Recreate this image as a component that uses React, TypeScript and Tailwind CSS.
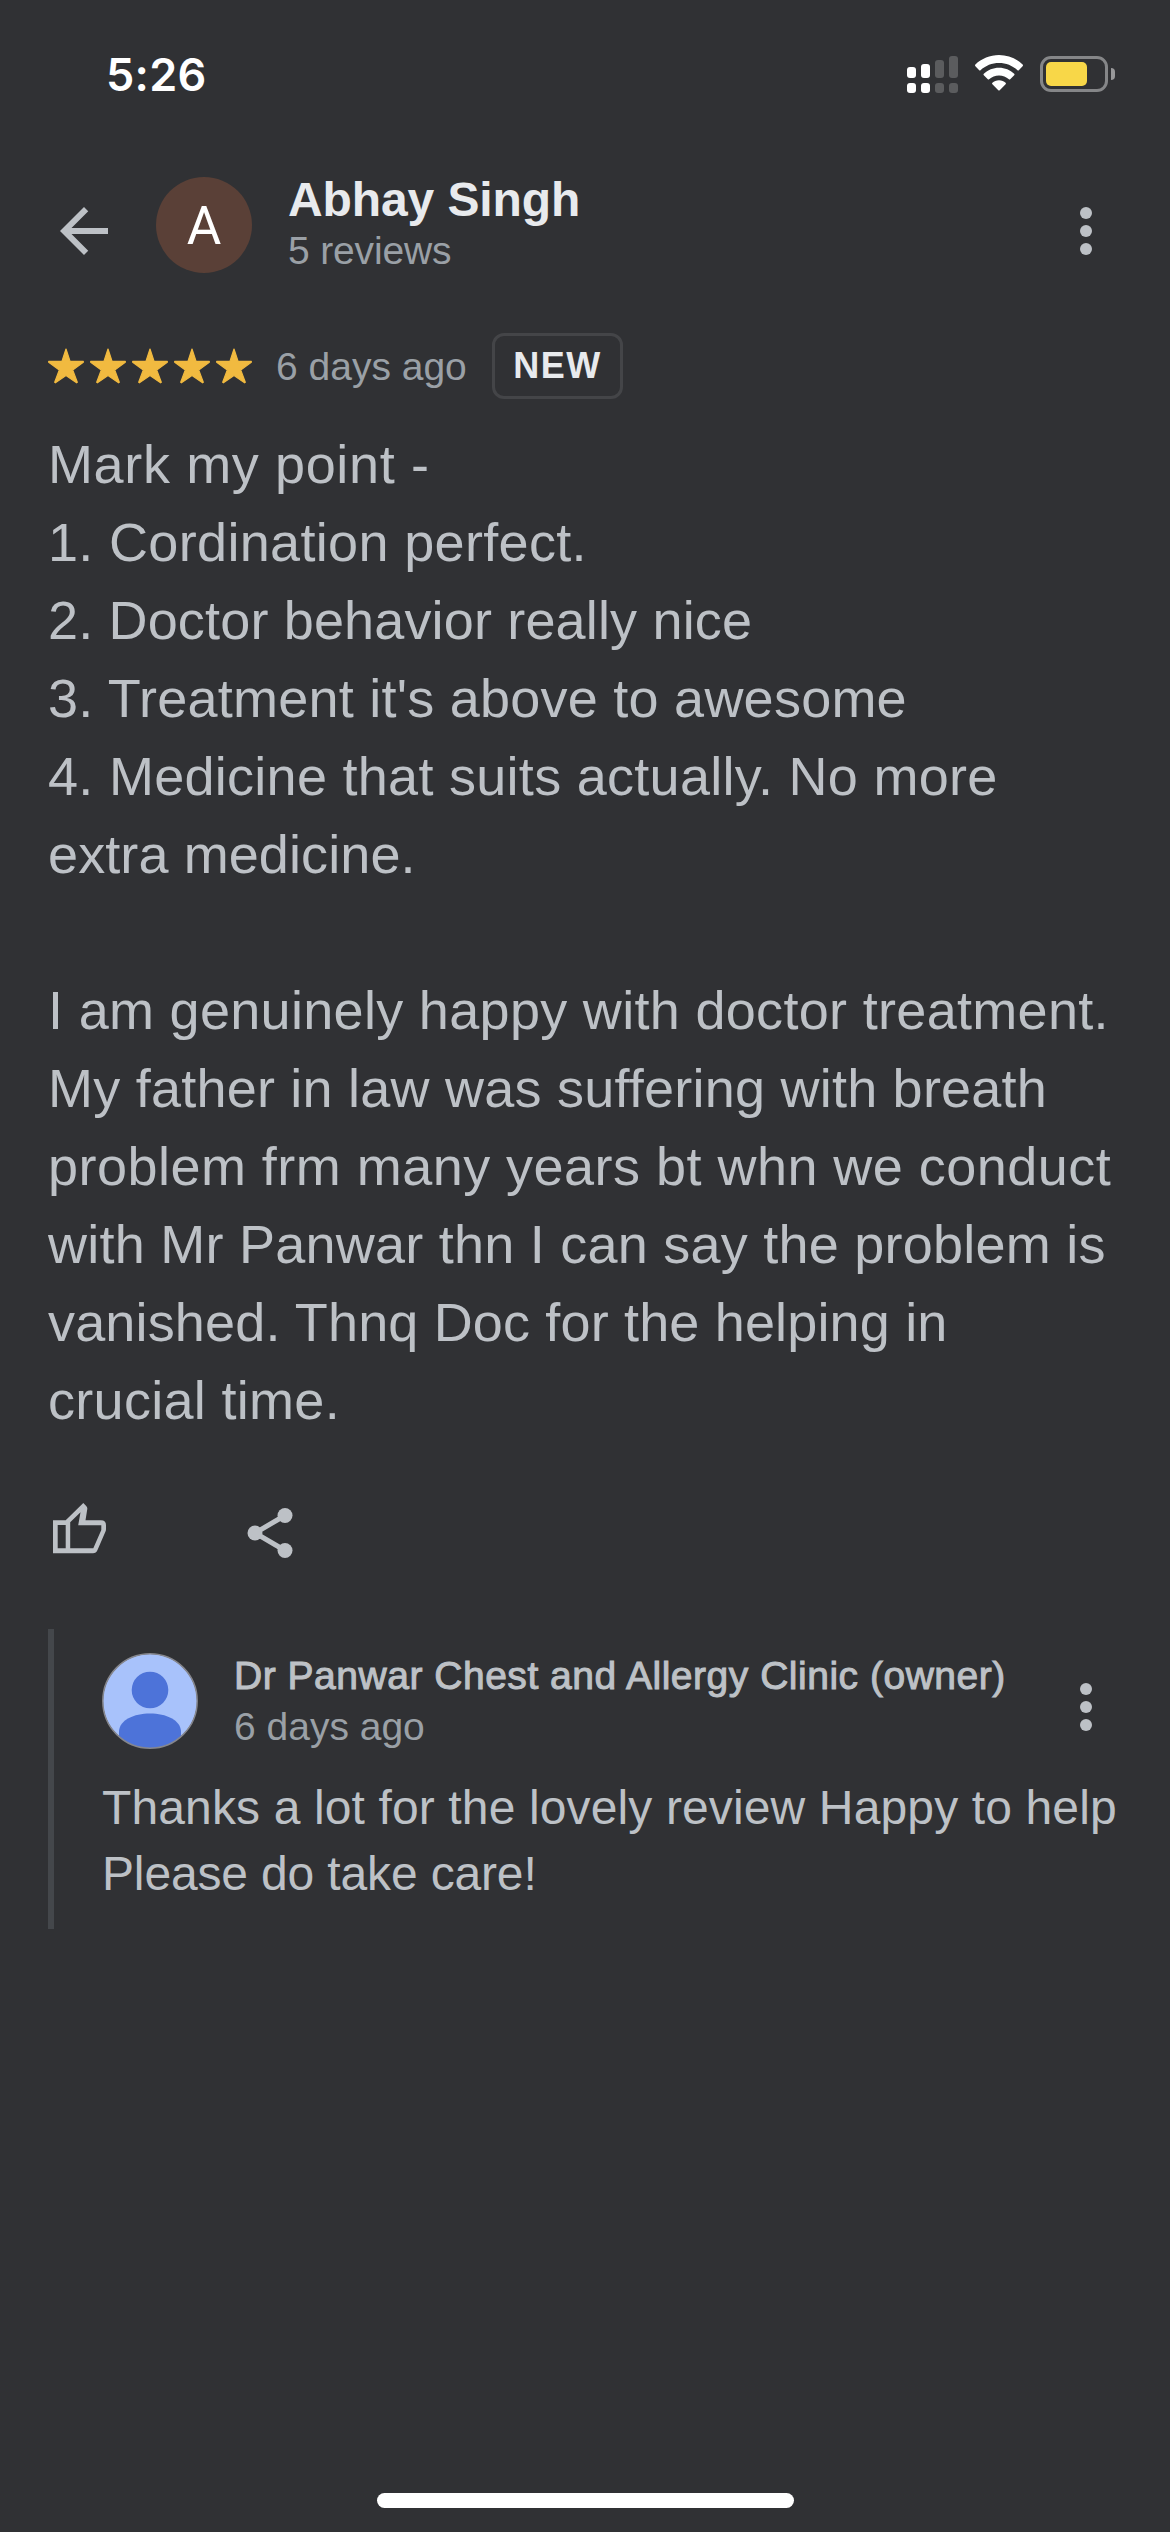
import React from "react";

type Line = { text: string; tracking: string };

const reviewLines: Line[] = [
  { text: "Mark my point -", tracking: "tracking-[0.63px]" },
  { text: "1. Cordination perfect.", tracking: "tracking-[0.33px]" },
  { text: "2. Doctor behavior really nice", tracking: "tracking-[0.16px]" },
  { text: "3. Treatment it's above to awesome", tracking: "tracking-[0.24px]" },
  { text: "4. Medicine that suits actually. No more", tracking: "tracking-[0.28px]" },
  { text: "extra medicine.", tracking: "tracking-[0.1px]" },
  { text: "", tracking: "" },
  { text: "I am genuinely happy with doctor treatment.", tracking: "tracking-[0.31px]" },
  { text: "My father in law was suffering with breath", tracking: "tracking-[0.23px]" },
  { text: "problem frm many years bt whn we conduct", tracking: "tracking-[0.47px]" },
  { text: "with Mr Panwar thn I can say the problem is", tracking: "tracking-[0.24px]" },
  { text: "vanished. Thnq Doc for the helping in", tracking: "tracking-[0.16px]" },
  { text: "crucial time.", tracking: "tracking-[0.3px]" },
];

const replyLines: Line[] = [
  { text: "Thanks a lot for the lovely review Happy to help", tracking: "tracking-[0.13px]" },
  { text: "Please do take care!", tracking: "tracking-[-0.15px]" },
];

function Kebab() {
  return (
    <svg viewBox="0 0 24 24" className="size-[72px] shrink-0 fill-[#bdc1c6]" aria-label="More options">
      <circle cx="12" cy="6" r="2" />
      <circle cx="12" cy="12" r="2" />
      <circle cx="12" cy="18" r="2" />
    </svg>
  );
}

function Star() {
  return (
    <svg viewBox="0 0 36 36" className="size-9 fill-[#f1ba40]">
      <path
        d="M18 1 L22 13.300 H35.300 V14.200 L24.700 21.900 L29.300 34.300 L28.600 34.800 L18 27.600 L7.400 34.800 L6.700 34.300 L11.300 21.900 L0.700 14.200 V13.300 H14 Z"
        stroke="#f1ba40"
        strokeWidth="1.2"
        strokeLinejoin="round"
      />
    </svg>
  );
}

function Signal() {
  return (
    <svg viewBox="0 0 51 37" className="h-[37px] w-[51px]">
      <g fill="#fff">
        <rect x="0" y="11" width="9" height="11" rx="3" />
        <rect x="14" y="8" width="9" height="14" rx="3" />
        <rect x="0" y="27" width="9" height="10" rx="3" />
        <rect x="14" y="27" width="9" height="10" rx="3" />
      </g>
      <g fill="#5b5c5e">
        <rect x="28" y="4" width="9" height="18" rx="3" />
        <rect x="42" y="0" width="9" height="22" rx="3" />
        <rect x="28" y="27" width="9" height="10" rx="3" />
        <rect x="42" y="27" width="9" height="10" rx="3" />
      </g>
    </svg>
  );
}

function Wifi() {
  return (
    <svg viewBox="0 0 48 36" className="h-9 w-12 fill-white">
      <path d="M24 0 C33 0 41.5 3.6 47.6 9.4 Q48.5 10.3 47.6 11.2 L43.8 15.2 Q43.2 15.8 42.5 15.2 C37.5 10.600 31 8 24 8 C17 8 10.500 10.600 5.500 15.200 Q4.800 15.800 4.200 15.200 L0.400 11.200 Q-0.500 10.300 0.400 9.400 C6.500 3.600 15 0 24 0 Z" />
      <path d="M24 12.700 C29.900 12.700 35.200 15 39.200 18.700 Q40 19.500 39.200 20.300 L35.200 24.300 Q34.600 24.900 33.900 24.300 C31.200 22 27.800 20.600 24 20.600 C20.200 20.600 16.800 22 14.100 24.300 Q13.400 24.900 12.800 24.300 L8.800 20.300 Q8 19.500 8.800 18.700 C12.800 15 18.100 12.700 24 12.700 Z" />
      <path d="M24 25.200 C26.700 25.200 28.900 26.200 30.600 27.700 Q31.400 28.500 30.600 29.300 L24.700 35.200 Q24 35.900 23.300 35.200 L17.400 29.300 Q16.600 28.500 17.400 27.700 C19.100 26.200 21.300 25.200 24 25.200 Z" />
    </svg>
  );
}

function Battery() {
  return (
    <div className="flex items-center">
      <div className="h-9 w-[68px] rounded-[11px] border-[3px] border-[#858688] p-[3px]">
        <div className="h-6 w-[41px] rounded-[5px] bg-[#f8d748]" />
      </div>
      <div className="ml-[3px] h-3 w-1 rounded-r-full bg-[#98989a]" />
    </div>
  );
}

function StatusBar() {
  return (
    <div className="flex h-[150px] items-start justify-between pl-[106px] pr-[55px]">
      <div className="mt-[45px] font-[Inter,sans-serif] text-[45px] leading-[60px] font-semibold tracking-[0.3px] text-white">5:26</div>
      <div className="mt-[55px] flex items-start">
        <div className="mt-px"><Signal /></div>
        <div className="ml-[17px]"><Wifi /></div>
        <div className="ml-[17px] mt-px"><Battery /></div>
      </div>
    </div>
  );
}

function Header() {
  return (
    <header className="flex h-[135px] items-start px-12">
      <svg viewBox="0 0 24 24" className="mt-[45px] size-[72px] fill-[#bdc1c6]" aria-label="Back">
        <path d="M20 11H7.830l5.590-5.590L12 4l-8 8 8 8 1.410-1.410L7.830 13H20v-2z" />
      </svg>
      <div className="mt-[27px] ml-9 flex size-24 items-center justify-center rounded-full bg-[#5a4037] pt-0.5 font-[Roboto,sans-serif] text-[53px] leading-none text-white">
        A
      </div>
      <div className="mt-[21px] ml-9 flex-1 whitespace-nowrap">
        <div className="text-[48px] leading-[57px] font-bold tracking-[-0.1px] text-[#e8eaed]">Abhay Singh</div>
        <div className="text-[39px] leading-[46px] tracking-[-0.15px] text-[#9aa0a6]">5 reviews</div>
      </div>
      <div className="mt-[45px]"><Kebab /></div>
    </header>
  );
}

function RatingRow() {
  return (
    <div className="mt-[48px] flex h-[66px] items-center px-12">
      <div className="flex gap-1.5">
        {[0, 1, 2, 3, 4].map((i) => (
          <Star key={i} />
        ))}
      </div>
      <div className="mt-0.5 ml-[24px] w-[192px] text-[39px] leading-[48px] whitespace-nowrap text-[#9aa0a6]">6 days ago</div>
      <div className="ml-6 flex h-[66px] w-[131px] items-center justify-center rounded-xl border-[3px] border-[#444548] text-[36px] leading-none font-bold tracking-[1.500px] text-[#e8eaed]">
        NEW
      </div>
    </div>
  );
}

function Actions() {
  return (
    <div className="mt-[64px] flex items-start pl-[53px]">
      <svg viewBox="0 0 54 51" className="h-[51px] w-[54px] fill-[#bdc1c6]" aria-label="Like">
        <path
          fillRule="evenodd"
          d="M0 17.300 H12.700 L30.300 0 L33.200 2.900 Q34.500 4.200 34.300 6 L32.500 17.300 H48 Q53 17.300 53 22.300 V26 Q53 27.500 52.500 28.500 L44.500 47 Q43.200 50.300 40 50.300 H0 Z M4.700 22 V45.300 H12.700 V22 Z M17.200 19.300 V45.300 H40.300 L48.300 27 V22.300 H25.200 L27.500 9.300 Z"
        />
      </svg>
      <svg viewBox="0 0 24 24" className="ml-[133px] size-[60px] fill-[#bdc1c6]" aria-label="Share">
        <circle cx="18" cy="5" r="3" />
        <circle cx="6" cy="12" r="3" />
        <circle cx="18" cy="19" r="3" />
        <path d="M18 5 L6 12 L18 19" fill="none" stroke="#bdc1c6" strokeWidth="2" />
      </svg>
    </div>
  );
}

function OwnerAvatar() {
  return (
    <svg viewBox="0 0 96 96" className="size-24 shrink-0">
      <defs>
        <clipPath id="owner-avatar">
          <circle cx="48" cy="48" r="47" />
        </clipPath>
      </defs>
      <g clipPath="url(#owner-avatar)">
        <rect width="96" height="96" fill="#a8c2fb" />
        <circle cx="48" cy="37" r="18.300" fill="#4d73d9" />
        <path d="M17 96 V79 C17 67 32 60.500 48 60.500 C64 60.500 79 67 79 79 V96 Z" fill="#4d73d9" />
      </g>
      <circle cx="48" cy="48" r="47.200" fill="none" stroke="#85868c" strokeWidth="1.500" />
    </svg>
  );
}

function OwnerReply() {
  return (
    <section className="mt-[66px] ml-12 h-[300px] border-l-[6px] border-[#44474b] pt-6 pr-12 pl-12">
      <div className="flex h-24 items-start">
        <OwnerAvatar />
        <div className="ml-9 flex-1 whitespace-nowrap">
          <div className="mt-[-2px] text-[39px] leading-[50px] tracking-[0.52px] text-[#bdc1c6] [-webkit-text-stroke:1px_#bdc1c6]">
            Dr Panwar Chest and Allergy Clinic (owner)
          </div>
          <div className="text-[39px] leading-[52px] text-[#9aa0a6]">6 days ago</div>
        </div>
        <div className="mt-[18px]"><Kebab /></div>
      </div>
      <div className="mt-[26px] text-[48px] leading-[66px] whitespace-nowrap text-[#bdc1c6]">
        {replyLines.map((line) => (
          <div key={line.text} className={line.tracking}>{line.text}</div>
        ))}
      </div>
    </section>
  );
}

export default function App() {
  return (
    <main className="flex h-[2532px] w-[1170px] flex-col overflow-hidden bg-[#303134] font-['Liberation_Sans',Arial,sans-serif]">
      <StatusBar />
      <Header />
      <RatingRow />
      <div className="mt-[26px] pl-12 text-[54px] leading-[78px] whitespace-nowrap text-[#bdc1c6]">
        {reviewLines.map((line, i) => (
          <div key={i} className={`h-[78px] ${line.tracking}`}>{line.text}</div>
        ))}
      </div>
      <Actions />
      <OwnerReply />
      <div className="mt-auto mb-6 h-[15px] w-[417px] self-center rounded-full bg-white" />
    </main>
  );
}
